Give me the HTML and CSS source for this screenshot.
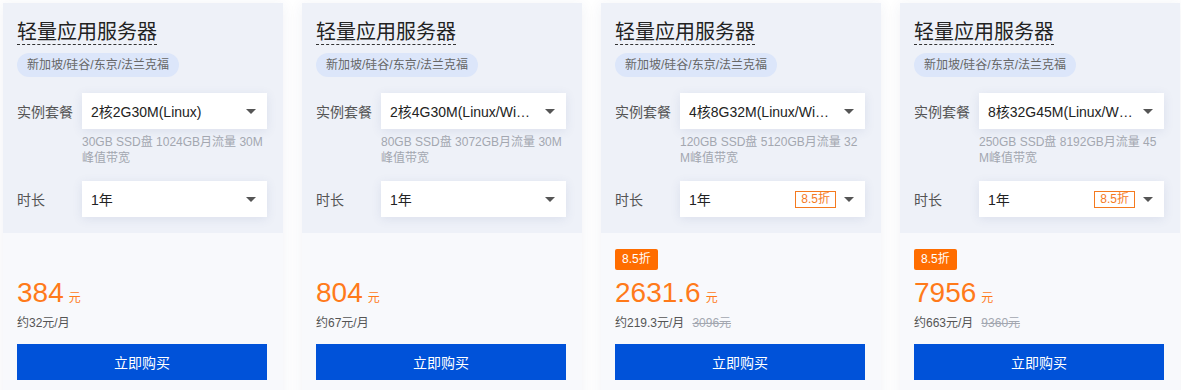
FILE: index.html
```html
<!DOCTYPE html>
<html lang="zh-CN">
  <head>
    <meta charset="UTF-8" />
    <meta name="viewport" content="width=device-width, initial-scale=1.0" />
    <title>轻量应用服务器</title>
    <link rel="stylesheet" href="styles.css">
  </head>
  <body>
    <div class="card-list">
      <div class="card">
        <div class="card-top">
          <div class="title">轻量应用服务器</div>
          <div class="region">新加坡/硅谷/东京/法兰克福</div>
          <div class="field">
            <div class="label">实例套餐</div>
            <div class="select"><span class="value">2核2G30M(Linux)</span><span class="arrow"></span></div>
          </div>
          <div class="desc">30GB SSD盘 1024GB月流量 30M峰值带宽</div>
          <div class="field field-time">
            <div class="label">时长</div>
            <div class="select"><span class="value">1年</span><span class="arrow"></span></div>
          </div>
        </div>
        <div class="card-bottom">
          <div class="off-tag hidden">8.5折</div>
          <div class="price">384<span class="unit">元</span></div>
          <div class="monthly">约32元/月</div>
          <button class="buy">立即购买</button>
        </div>
      </div>

      <div class="card">
        <div class="card-top">
          <div class="title">轻量应用服务器</div>
          <div class="region">新加坡/硅谷/东京/法兰克福</div>
          <div class="field">
            <div class="label">实例套餐</div>
            <div class="select"><span class="value">2核4G30M(Linux/Windows)</span><span class="arrow"></span></div>
          </div>
          <div class="desc">80GB SSD盘 3072GB月流量 30M峰值带宽</div>
          <div class="field field-time">
            <div class="label">时长</div>
            <div class="select"><span class="value">1年</span><span class="arrow"></span></div>
          </div>
        </div>
        <div class="card-bottom">
          <div class="off-tag hidden">8.5折</div>
          <div class="price">804<span class="unit">元</span></div>
          <div class="monthly">约67元/月</div>
          <button class="buy">立即购买</button>
        </div>
      </div>

      <div class="card">
        <div class="card-top">
          <div class="title">轻量应用服务器</div>
          <div class="region">新加坡/硅谷/东京/法兰克福</div>
          <div class="field">
            <div class="label">实例套餐</div>
            <div class="select"><span class="value">4核8G32M(Linux/Windows)</span><span class="arrow"></span></div>
          </div>
          <div class="desc">120GB SSD盘 5120GB月流量 32M峰值带宽</div>
          <div class="field field-time">
            <div class="label">时长</div>
            <div class="select"><span class="value">1年</span><span class="mini-tag">8.5折</span><span class="arrow"></span></div>
          </div>
        </div>
        <div class="card-bottom">
          <div class="off-tag">8.5折</div>
          <div class="price">2631.6<span class="unit">元</span></div>
          <div class="monthly">约219.3元/月<span class="old">3096元</span></div>
          <button class="buy">立即购买</button>
        </div>
      </div>

      <div class="card">
        <div class="card-top">
          <div class="title">轻量应用服务器</div>
          <div class="region">新加坡/硅谷/东京/法兰克福</div>
          <div class="field">
            <div class="label">实例套餐</div>
            <div class="select"><span class="value">8核32G45M(Linux/Windows)</span><span class="arrow"></span></div>
          </div>
          <div class="desc">250GB SSD盘 8192GB月流量 45M峰值带宽</div>
          <div class="field field-time">
            <div class="label">时长</div>
            <div class="select"><span class="value">1年</span><span class="mini-tag">8.5折</span><span class="arrow"></span></div>
          </div>
        </div>
        <div class="card-bottom">
          <div class="off-tag">8.5折</div>
          <div class="price">7956<span class="unit">元</span></div>
          <div class="monthly">约663元/月<span class="old">9360元</span></div>
          <button class="buy">立即购买</button>
        </div>
      </div>
    </div>
  </body>
</html>
```

FILE: styles.css
```css
body {
  margin: 0;
  padding: 3px 0 0 3px;
  background: #fff;
  font-family: "Liberation Sans", "Noto Sans CJK SC", sans-serif;
  color: #333;
  overflow: hidden;
}
.card-list {
  display: flex;
  gap: 19px;
}
.card {
  width: 280px;
  flex: none;
  box-shadow: 0 2px 14px rgba(40, 60, 110, 0.07);
}
.card-top {
  background: #eef1f8;
  padding: 17px 16px 16px 14px;
}
.title {
  display: inline-block;
  font-size: 20px;
  line-height: 24px;
  color: #222;
  border-bottom: 1px dashed #333;
}
.region {
  width: fit-content;
  margin-top: 8px;
  padding: 0 10px;
  height: 24px;
  line-height: 24px;
  border-radius: 12px;
  background: #dce6fa;
  font-size: 12px;
  color: #666;
}
.field {
  display: flex;
  align-items: center;
  margin-top: 16px;
}
.field-time {
  margin-top: 15px;
}
.label {
  width: 65px;
  font-size: 14px;
  color: #555;
}
.select {
  width: 185px;
  height: 36px;
  box-sizing: border-box;
  padding: 0 11px 0 9px;
  background: #fff;
  box-shadow: 0 2px 10px rgba(60, 80, 140, 0.1);
  display: flex;
  align-items: center;
  font-size: 14px;
  color: #222;
}
.value {
  flex: 1;
  white-space: nowrap;
  overflow: hidden;
  text-overflow: ellipsis;
  padding-right: 10px;
}
.arrow {
  width: 0;
  height: 0;
  border-left: 5px solid transparent;
  border-right: 5px solid transparent;
  border-top: 5px solid #555;
}
.mini-tag {
  font-size: 12px;
  line-height: 15px;
  padding: 0 5px;
  border: 1px solid #f57a1f;
  color: #f57a1f;
  margin-right: 8px;
}
.desc {
  margin: 5px 0 0 65px;
  font-size: 12px;
  line-height: 16px;
  color: #a3a7b0;
  word-break: break-all;
}
.card-bottom {
  background: #f8f9fc;
  padding: 16px 16px 20px 14px;
}
.off-tag {
  width: fit-content;
  height: 21px;
  line-height: 21px;
  padding: 0 7px;
  border-radius: 2px;
  background: #ff6d00;
  color: #fff;
  font-size: 12px;
}
.hidden {
  visibility: hidden;
}
.price {
  margin-top: 7px;
  font-size: 28px;
  line-height: 32px;
  color: #ff7a1a;
}
.unit {
  font-size: 12px;
  margin-left: 5px;
}
.monthly {
  font-size: 12px;
  line-height: 18px;
  color: #555;
}
.old {
  margin-left: 8px;
  color: #a3a7b0;
  text-decoration: line-through;
}
.buy {
  display: block;
  width: 250px;
  height: 36px;
  margin-top: 12px;
  border: none;
  background: #0052d9;
  color: #fff;
  font-family: inherit;
  font-size: 14px;
}
```
